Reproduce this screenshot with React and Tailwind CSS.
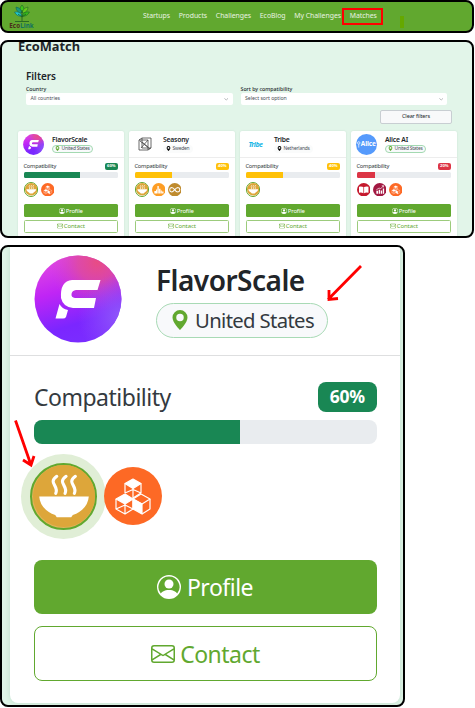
import React from "react";
import { BsPersonCircle, BsEnvelope, BsGeoAltFill, BsChevronDown } from "react-icons/bs";

function FlavorLogo({ className }) {
  return (
    <svg viewBox="0 0 88 88" className={className}>
      <defs>
        <linearGradient id="flavorBase" x1="0.2" y1="0" x2="0.5" y2="1">
          <stop offset="0" stopColor="#e54be0" />
          <stop offset="0.4" stopColor="#c025f5" />
          <stop offset="0.8" stopColor="#7b26ff" />
          <stop offset="1" stopColor="#7a2cff" />
        </linearGradient>
        <radialGradient id="flavorPink" cx="0.72" cy="0.08" r="0.55">
          <stop offset="0" stopColor="#e84c84" />
          <stop offset="0.4" stopColor="#e04c9a" stopOpacity="0.8" />
          <stop offset="1" stopColor="#d040d0" stopOpacity="0" />
        </radialGradient>
        <radialGradient id="flavorBlue" cx="1" cy="0.7" r="0.5">
          <stop offset="0" stopColor="#8f58fa" />
          <stop offset="1" stopColor="#8f50fa" stopOpacity="0" />
        </radialGradient>
      </defs>
      <circle cx="44" cy="44" r="43.5" fill="url(#flavorBase)" />
      <circle cx="44" cy="44" r="43.5" fill="url(#flavorPink)" />
      <circle cx="44" cy="44" r="43.5" fill="url(#flavorBlue)" />
      <path d="M38 25H66.500L63.500 35H42Q38 35.500 37.500 39T41 43H62L60 53H39Q29 52 27 43Q26 26 38 25Z" fill="#fff" />
      <path d="M25.500 49Q28 54 34 55L32 62Q31 63.500 29 63.500H21.500Z" fill="#fff" />
    </svg>
  );
}

function BowlIcon({ className }) {
  return (
    <svg viewBox="0 0 60 60" className={className}>
      <circle cx="30" cy="30" r="30" fill="#dda63a" />
      <path d="M6 30.500H54Q53 43 38.500 48.500L37 50.500H23L21.500 48.500Q7 43 6 30.500Z" fill="#fff" />
      <g fill="none" stroke="#fff" strokeWidth="3" strokeLinecap="round">
        <path d="M23 11C14 17.500 25.500 20 22 27.500" />
        <path d="M32 11C23 17.500 34.500 20 31 27.500" />
        <path d="M41 11C32 17.500 43.500 20 40 27.500" />
      </g>
    </svg>
  );
}

function CubesIcon({ className }) {
  return (
    <svg viewBox="0 0 58 58" className={className}>
      <circle cx="29" cy="29" r="29" fill="#fd6925" />
      <g stroke="#fff" strokeWidth="1.200" strokeLinejoin="round" fill="none">
        <path d="M29 12L37 16.500L29 21.500L21 16.500Z" fill="#fff" />
        <path d="M21 16.500V26M37 16.500V26M29 21.500V31M21 26L29 22.500L37 26" />
        <path d="M12 32L21 27L29 32L21 37Z" fill="#fff" />
        <path d="M12 32V42L21 47L29 42V32M21 37V47M12 42L21 38L29 42" />
        <path d="M29 32L37 27L46 32L38 37Z" />
        <path d="M29 32L38 37V47L29 42Z" fill="#fff" />
        <path d="M46 32V42L38 47M29 31L37 26" />
      </g>
    </svg>
  );
}

function ChartIcon({ className }) {
  return (
    <svg viewBox="0 0 40 40" className={className}>
      <circle cx="20" cy="20" r="20" fill="#fd9d24" />
      <path d="M7 31V24H12V19H15V31H16V9H20V31H21V17H25V31H26V22H29V31H30V25H34V31Z" fill="#fff" />
    </svg>
  );
}

function InfinityIcon({ className }) {
  return (
    <svg viewBox="0 0 40 40" className={className}>
      <circle cx="20" cy="20" r="20" fill="#bf8b2e" />
      <path d="M20 20C16 14 13 13 11 13C3 14 3 26 11 27C17 27 22 13 29 13C37 14 37 26 29 27C26 27 23 25 20 20" fill="none" stroke="#fff" strokeWidth="3" />
    </svg>
  );
}

function BookIcon({ className }) {
  return (
    <svg viewBox="0 0 40 40" className={className}>
      <circle cx="20" cy="20" r="20" fill="#c5192d" />
      <path d="M6 11Q13 9 19 12V30Q13 27 6 29ZM21 12Q27 9 34 11V29Q27 27 21 30Z" fill="#fff" />
    </svg>
  );
}

function GrowthIcon({ className }) {
  return (
    <svg viewBox="0 0 40 40" className={className}>
      <circle cx="20" cy="20" r="20" fill="#a21942" />
      <path d="M10 23H15V32H10ZM17 20H21V32H17ZM23 22H27V32H23ZM29 16H33V32H29Z" fill="#fff" />
      <path d="M10 20L18 15L23 17L31 8M26 8H31V13" fill="none" stroke="#fff" strokeWidth="2" />
    </svg>
  );
}

function EcoLogo() {
  return (
    <svg viewBox="0 0 20 19" className="h-[19px] w-5">
      <path d="M10 1Q14 5 10 9Q6 5 10 1Z" fill="#42c51b" stroke="#155d27" strokeWidth="0.500" />
      <path d="M10 8Q12 3 16 3Q16 8 11 9Z" fill="#69c91c" stroke="#155d27" strokeWidth="0.500" />
      <path d="M10 8Q8 3 4 3Q4 8 9 9Z" fill="#1a9b79" stroke="#12594d" strokeWidth="0.500" />
      <path d="M10 12Q5 13 2.500 8Q8 7 10 12Z" fill="#1fc7ce" stroke="#12594d" strokeWidth="0.500" />
      <path d="M10 12Q15 13 17.500 8Q12 7 10 12Z" fill="#36b71a" stroke="#155d27" strokeWidth="0.500" />
      <path d="M10 6V17M10 13L6 10M10 13L14 10M3 17.500H17" stroke="#1c5b22" strokeWidth="0.800" fill="none" />
    </svg>
  );
}

function SeasonyLogo() {
  return (
    <svg viewBox="0 0 14 14" className="h-3.5 w-3.5" fill="none" stroke="#454545" strokeWidth="0.800">
      <path d="M1 3H10V13H1ZM4 1H13V11H4ZM1 3L4 1M10 13L13 11M2 4L12 12M4 5L10 10M3 11L10 3" />
    </svg>
  );
}

function CardLogo({ name }) {
  if (name === "FlavorScale") return <FlavorLogo className="h-[21px] w-[21px]" />;
  if (name === "Seasony") return <SeasonyLogo />;
  if (name === "Tribe")
    return <span className="text-[7px] font-bold italic leading-none tracking-[-0.5px] text-[#18b6e6]">Tribe</span>;
  return (
    <span className="flex h-[21px] w-[21px] items-center justify-center overflow-hidden rounded-full bg-[#559afc] text-white">
      <svg viewBox="0 0 4 8" className="h-[7px] w-[3.500px]" fill="none" stroke="currentColor" strokeWidth="0.800">
        <circle cx="2" cy="2.200" r="1.400" />
        <path d="M2 3.600V7.500" />
      </svg>
      <span className="text-[6.4px] font-bold leading-none tracking-[-0.1px]">Alice</span>
    </span>
  );
}

const goalIcons = {
  bowl: BowlIcon,
  cubes: CubesIcon,
  chart: ChartIcon,
  infinity: InfinityIcon,
  book: BookIcon,
  growth: GrowthIcon,
};

const matches = [
  { name: "FlavorScale", country: "United States", same: true, score: 60, color: "bg-[#198754]", goals: ["bowl", "cubes"] },
  { name: "Seasony", country: "Sweden", same: false, score: 40, color: "bg-[#ffc107]", goals: ["bowl", "chart", "infinity"] },
  { name: "Tribe", country: "Netherlands", same: false, score: 40, color: "bg-[#ffc107]", goals: ["bowl"] },
  { name: "Alice AI", country: "United States", same: true, score: 20, color: "bg-[#dc3545]", goals: ["book", "growth", "cubes"] },
];

function MatchCard({ match }) {
  return (
    <article className="h-[120px] w-[105.5px] shrink-0 rounded-[2px] bg-white shadow-[0_0_2px_rgba(0,80,40,0.12)]">
      <header className="flex h-[26.5px] border-b border-[#ededed] pl-[5px] pt-[2.5px]">
        <div className="flex h-[21px] w-[21px] items-center justify-center">
          <CardLogo name={match.name} />
        </div>
        <div className="ml-[7.500px] flex flex-col items-start">
          <h3 className="h-[11px] whitespace-nowrap pl-[0.5px] text-[6.8px] font-semibold leading-[12px] tracking-[-0.2px] text-[#212529]">{match.name}</h3>
          <span
            className={
              "flex h-2 items-center gap-[1.5px] whitespace-nowrap rounded-full border-[0.5px] px-[2.500px] text-[4.9px] leading-none tracking-[-0.2px] text-[#495057] " +
              (match.same ? "border-[#a3d9b1] bg-[#f8fafb]" : "border-transparent bg-[#fafbfb]")
            }
          >
            <BsGeoAltFill className={"h-[5px] w-[5px] " + (match.same ? "text-[#61a82f]" : "text-black")} />
            {match.country}
          </span>
        </div>
      </header>
      <div className="px-[5.500px] pt-[5px]">
        <div className="flex h-[8px] items-center justify-between">
          <span className="text-[5.7px] leading-none tracking-[-0.22px] text-[#343a40]">Compatibility</span>
          <span className={"flex h-[7px] w-[13.5px] items-center justify-center rounded-[2px] text-[4.2px] font-bold leading-none tracking-[-0.1px] text-white " + match.color}>
            {match.score}%
          </span>
        </div>
        <div className="mt-[1.500px] h-[5.500px] overflow-hidden rounded-[1.5px] bg-[#e9ecef]">
          <div className={"h-full " + match.color} style={{ width: match.score + "%" }} />
        </div>
        <div className="mt-[4.500px] flex h-[15px] items-center gap-[2.500px]">
          {match.goals.map((goal) => {
            const Icon = goalIcons[goal];
            return goal === "bowl" ? (
              <span key={goal} className="h-[14.5px] w-[14.5px] rounded-full border-[0.8px] border-[#61a82f]">
                <Icon className="h-full w-full" />
              </span>
            ) : (
              <Icon key={goal} className="h-[13.5px] w-[13.5px]" />
            );
          })}
        </div>
        <div className="mt-[7px] flex h-[13px] items-center justify-center gap-[1px] rounded-[1.5px] bg-[#61a82f] text-[6px] leading-none tracking-[-0.15px] text-white">
          <BsPersonCircle className="h-[6px] w-[6px]" />
          Profile
        </div>
        <div className="mt-[2.500px] flex h-[13px] items-center justify-center gap-[1px] rounded-[1.5px] border border-[#9ccb7c] text-[6px] leading-none tracking-[-0.1px] text-[#61a82f]">
          <BsEnvelope className="h-[6px] w-[6px]" />
          Contact
        </div>
      </div>
    </article>
  );
}

function Select({ label, value }) {
  return (
    <div className="w-[206.5px]">
      <div className="h-[8px] whitespace-nowrap text-[5.3px] font-medium leading-[8px] tracking-[-0.02px] text-[#212529]">{label}</div>
      <div className="flex h-3 items-center justify-between rounded-[2px] bg-white pl-[4.500px] pr-[4px] text-[5.2px] leading-none tracking-[-0.05px] text-[#495057]">
        <span>{value}</span>
        <BsChevronDown className="h-[4.500px] w-[4.500px]" />
      </div>
    </div>
  );
}

function NavBar() {
  return (
    <nav className="relative h-[33px] w-[474px] rounded-[8px] border-2 border-black bg-[#61a82f]">
      <div className="flex h-full">
        <div className="ml-1.5 flex w-[27px] flex-col items-center pt-[2px]">
          <EcoLogo />
          <span className="-mt-px text-[6.2px] font-bold leading-[7px] tracking-[0.1px] text-[#4a2f1c]">
            Eco<span className="text-[#11715f]">Link</span>
          </span>
        </div>
        <div className="ml-[108px] flex h-[29px] items-center gap-[8.700px] whitespace-nowrap text-[6.900px] tracking-[-0.03px] text-[#e9f3e1]">
          <span>Startups</span>
          <span>Products</span>
          <span>Challenges</span>
          <span>EcoBlog</span>
          <span>My Challenges</span>
          <span>Matches</span>
        </div>
      </div>
      <div className="absolute left-[340px] top-[6px] h-[17px] w-[41px] border-2 border-[#ff0000]" />
      <div className="absolute left-[398px] top-[14px] h-3 w-1 bg-[#65a800]" />
    </nav>
  );
}

function MatchesPage() {
  return (
    <section className="mt-[7px] h-[198px] w-[474px] overflow-hidden rounded-[8px] border-2 border-black bg-[#e2f5e9]">
      <h1 className="-mt-[5px] ml-4 h-[17px] text-[12.800px] font-bold leading-[18px] text-[#212529]">EcoMatch</h1>
      <div className="ml-6 mt-[14px]">
        <h2 className="h-[17px] text-[10px] font-semibold leading-[17px] tracking-[-0.05px] text-[#212529]">Filters</h2>
        <div className="flex gap-2">
          <Select label="Country" value="All countries" />
          <Select label="Sort by compatibility" value="Select sort option" />
        </div>
        <div className="ml-[354px] mt-[5px] flex h-[14px] w-[72px] items-center justify-center rounded-[2px] border border-[#c8ced2] bg-[#f8f9fa] text-[5.5px] leading-none tracking-[-0.12px] text-[#212529]">
          Clear filters
        </div>
      </div>
      <div className="ml-4 mt-[7px] flex gap-[5.500px]">
        {matches.map((match) => (
          <MatchCard key={match.name} match={match} />
        ))}
      </div>
    </section>
  );
}

function FeaturedMatch() {
  return (
    <section className="relative mt-[7px] h-[462px] w-[405px] overflow-hidden rounded-[8px] border-2 border-black bg-[#e0f5e8]">
      <article className="ml-2 h-[456px] w-[390px] rounded-b-[8px] bg-white shadow-[0_0_6px_rgba(0,80,40,0.14)]">
        <header className="flex h-[109px] border-b border-[#dedfe0] pl-[23.500px] pt-[8px]">
          <FlavorLogo className="h-[88px] w-[88px]" />
          <div className="ml-[34px] flex flex-col items-start">
            <h2 className="mt-[7px] h-[40.500px] pl-[0.5px] text-[28px] font-semibold leading-[36px] tracking-[-0.5px] text-[#212529]">FlavorScale</h2>
            <div className="flex h-[35px] w-[172px] items-center whitespace-nowrap rounded-full border-[1.5px] border-[#a8dab5] bg-[#f8f9fb] pl-[13px] text-[20.3px] tracking-[-0.65px] text-[#343a40]">
              <BsGeoAltFill className="mr-[5.500px] h-5 w-5 shrink-0 text-[#61a82f]" />
              United States
            </div>
          </div>
        </header>
        <div className="pl-6 pr-[23.5px] pt-[26px]">
          <div className="flex h-[30px] items-center justify-between">
            <span className="text-[23px] leading-none tracking-[-0.5px] text-[#343a40]">Compatibility</span>
            <span className="flex h-[30px] w-[58.5px] items-center justify-center rounded-[8px] bg-[#198754] text-[17.500px] font-bold leading-none tracking-[-0.3px] text-white">60%</span>
          </div>
          <div className="mt-2 h-[23.5px] overflow-hidden rounded-[8px] bg-[#e9ecef]">
            <div className="h-full w-3/5 bg-[#198754]" />
          </div>
          <div className="-ml-[13px] mt-[9.500px] flex h-[86px] items-center">
            <div className="flex h-[85px] w-[85px] items-center justify-center rounded-full bg-[#e0eed6]">
              <div className="h-[67px] w-[67px] rounded-full border-2 border-[#61a82f] bg-[#e0b35a] p-[0.5px]">
                <BowlIcon className="h-full w-full" />
              </div>
            </div>
            <CubesIcon className="-ml-[2px] h-[58px] w-[58px]" />
          </div>
          <div className="mt-[21px] flex h-[54px] items-center justify-center gap-[5.500px] rounded-[8px] bg-[#61a82f] text-[23px] tracking-[-0.5px] text-white">
            <BsPersonCircle className="h-6 w-6" />
            Profile
          </div>
          <div className="mt-3 flex h-[55px] items-center justify-center gap-[5.500px] rounded-[8px] border border-[#61a82f] text-[23px] tracking-[-0.5px] text-[#61a82f]">
            <BsEnvelope className="h-6 w-6" />
            <span className="pt-0.5">Contact</span>
          </div>
        </div>
      </article>
      <svg viewBox="0 0 405 462" className="pointer-events-none absolute -left-[2px] -top-[2px] h-[462px] w-[405px]" fill="none" stroke="#ff0000" strokeWidth="2.800">
        <path d="M361 21L328 54.500M329 45V54.500L338 53.500" />
        <path d="M15.500 175.500L31 220M23 215L31 220L34 211" />
      </svg>
    </section>
  );
}

export default function App() {
  return (
    <main className="h-[708px] w-[475px] overflow-hidden bg-white font-['Noto_Sans',sans-serif]">
      <NavBar />
      <MatchesPage />
      <FeaturedMatch />
    </main>
  );
}
